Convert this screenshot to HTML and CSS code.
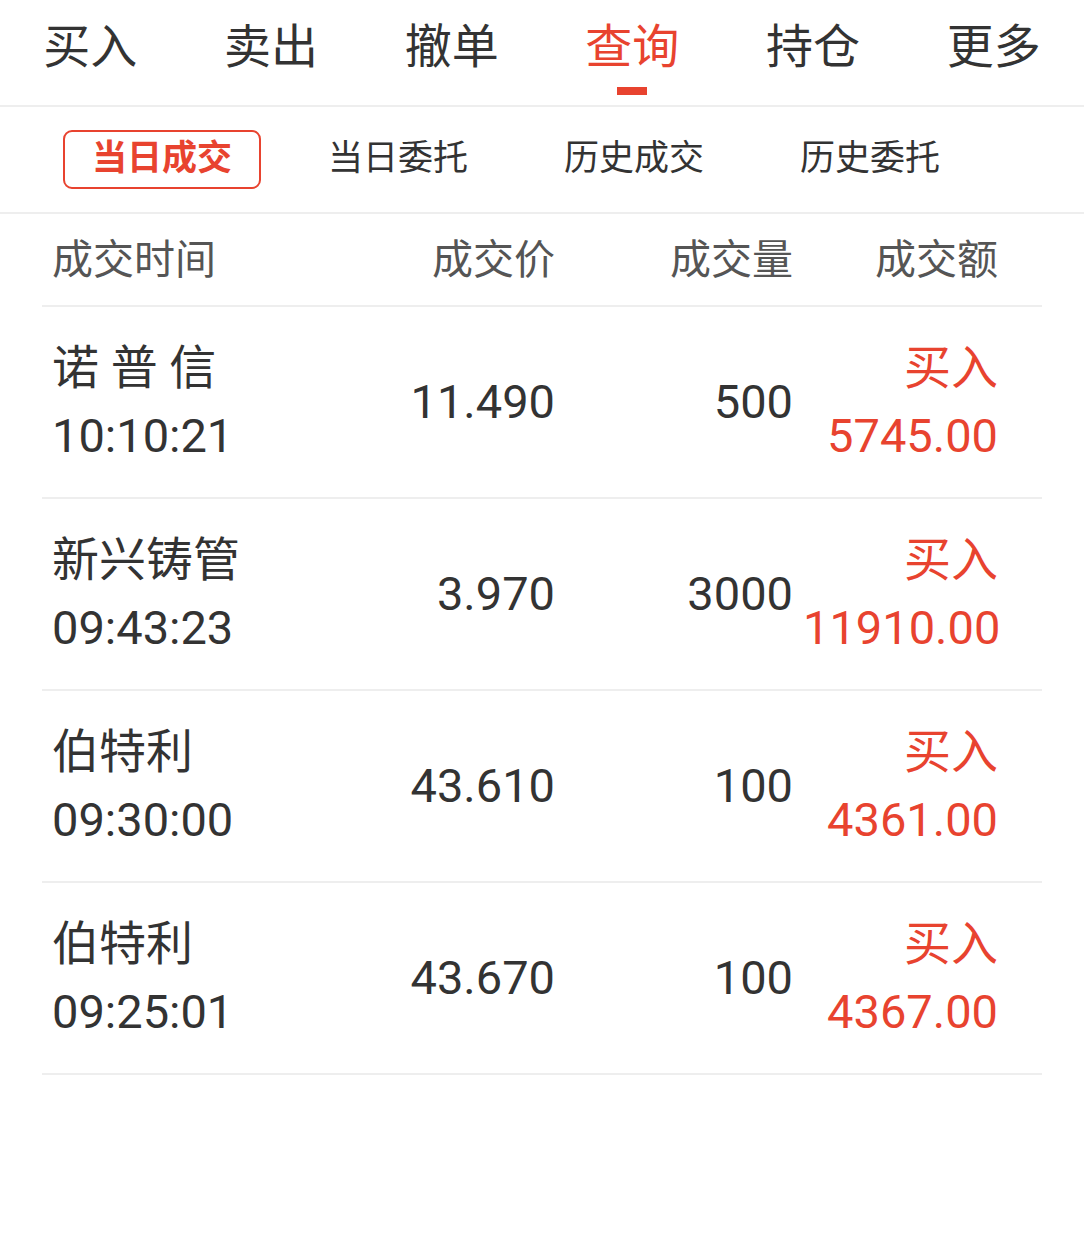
FILE: index.html
```html
<!DOCTYPE html>
<html lang="zh-CN">
<head>
    <meta charset="UTF-8">
    <meta name="viewport" content="width=device-width, initial-scale=1.0">
    <title>查询</title>
    <link rel="stylesheet" href="styles.css">
</head>
<body>
    <div class="tabs">
        <div class="tab">买入</div>
        <div class="tab">卖出</div>
        <div class="tab">撤单</div>
        <div class="tab active">查询<span class="bar"></span></div>
        <div class="tab">持仓</div>
        <div class="tab">更多</div>
    </div>

    <div class="subtabs">
        <div class="sub"><span class="sub-on">当日成交</span></div>
        <div class="sub">当日委托</div>
        <div class="sub">历史成交</div>
        <div class="sub">历史委托</div>
    </div>

    <div class="list">
        <div class="row head">
            <div class="c1">成交时间</div>
            <div class="c2">成交价</div>
            <div class="c3">成交量</div>
            <div class="c4">成交额</div>
        </div>
        <div class="row">
            <div class="c1"><div>诺 普 信</div><div>10:10:21</div></div>
            <div class="c2">11.490</div>
            <div class="c3">500</div>
            <div class="c4 red"><div>买入</div><div>5745.00</div></div>
        </div>
        <div class="row">
            <div class="c1"><div>新兴铸管</div><div>09:43:23</div></div>
            <div class="c2">3.970</div>
            <div class="c3">3000</div>
            <div class="c4 red"><div>买入</div><div>11910.00</div></div>
        </div>
        <div class="row">
            <div class="c1"><div>伯特利</div><div>09:30:00</div></div>
            <div class="c2">43.610</div>
            <div class="c3">100</div>
            <div class="c4 red"><div>买入</div><div>4361.00</div></div>
        </div>
        <div class="row">
            <div class="c1"><div>伯特利</div><div>09:25:01</div></div>
            <div class="c2">43.670</div>
            <div class="c3">100</div>
            <div class="c4 red"><div>买入</div><div>4367.00</div></div>
        </div>
    </div>
</body>
</html>
```

FILE: styles.css
```css
body {
    margin: 0;
    background: #fff;
    color: #333;
    font-family: Roboto, "Noto Sans CJK SC", sans-serif;
}

.tabs {
    display: flex;
    height: 105px;
    border-bottom: 2px solid #eee;
}

.tab {
    flex: 1;
    display: flex;
    flex-direction: column;
    align-items: center;
    padding-top: 19px;
    font-size: 47px;
    line-height: 56px;
    color: #333;
}

.tab.active {
    color: #e8432f;
}

.bar {
    width: 30px;
    height: 8px;
    margin-top: 12px;
    background: #e8432f;
}

.subtabs {
    display: flex;
    align-items: center;
    height: 105px;
    padding-left: 44px;
    border-bottom: 2px solid #eee;
}

.sub {
    width: 236px;
    text-align: center;
    font-size: 35px;
    line-height: 52px;
    padding-bottom: 2px;
    color: #333;
}

.sub-on {
    display: inline-block;
    width: 194px;
    height: 55px;
    line-height: 53px;
    border: 2px solid #e8432f;
    border-radius: 9px;
    color: #e8432f;
    font-weight: bold;
}

.sub:first-child {
    padding-bottom: 0;
}

.list {
    margin: 0 42px;
}

.row {
    display: grid;
    grid-template-columns: 323px 200px 238px 239px;
    align-items: center;
    height: 190px;
    border-bottom: 2px solid #eee;
    font-size: 47px;
    line-height: 68px;
}

.row.head {
    height: 91px;
    font-size: 41px;
    color: #555;
}

.c1 {
    padding-left: 10px;
}

.c2, .c3 {
    text-align: right;
    padding-right: 10px;
}

.c4 {
    text-align: right;
    padding-right: 44px;
}

.red {
    color: #e8432f;
}
```
